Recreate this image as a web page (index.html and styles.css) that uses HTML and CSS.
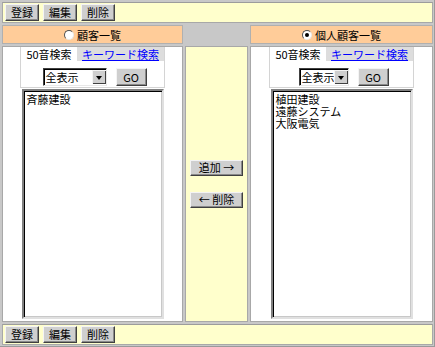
FILE: index.html
```html
<!DOCTYPE html>
<html lang="ja">
<head>
<meta charset="utf-8">
<link rel="stylesheet" href="styles.css">
</head>
<body>
<div class="frame">
  <div class="bar">
    <button class="btn">登録</button>
    <button class="btn">編集</button>
    <button class="btn">削除</button>
  </div>

  <div class="head orange"><span class="radio"></span>顧客一覧</div>
  <div class="head mid"></div>
  <div class="head orange"><span class="radio on"></span>個人顧客一覧</div>

  <div class="panel">
    <div class="search">
      <div class="tabs">
        <span class="tab active">50音検索</span>
        <span class="tab other"><a href="#">キーワード検索</a></span>
      </div>
      <div class="controls">
        <span class="select wide"><span class="val">全表示</span><span class="arrow"></span></span>
        <button class="btn go">GO</button>
      </div>
    </div>
    <div class="list">
      <div>斉藤建設</div>
    </div>
  </div>

  <div class="middle">
    <button class="btn move">追加 →</button>
    <button class="btn move">← 削除</button>
  </div>

  <div class="panel">
    <div class="search">
      <div class="tabs">
        <span class="tab active">50音検索</span>
        <span class="tab other"><a href="#">キーワード検索</a></span>
      </div>
      <div class="controls">
        <span class="select narrow"><span class="val">全表示</span><span class="arrow"></span></span>
        <button class="btn go">GO</button>
      </div>
    </div>
    <div class="list">
      <div>植田建設</div>
      <div>遠藤システム</div>
      <div>大阪電気</div>
    </div>
  </div>

  <div class="bar">
    <button class="btn">登録</button>
    <button class="btn">編集</button>
    <button class="btn">削除</button>
  </div>
</div>
</body>
</html>
```

FILE: styles.css
```css
html, body {
  margin: 0;
  padding: 0;
  background: #ffffff;
}

body {
  font-family: "Noto Sans CJK JP", "Noto Sans", sans-serif;
  font-size: 11px;
  color: #000;
}

.frame {
  box-sizing: border-box;
  width: 435px;
  height: 347px;
  background: #c8c8c8;
  border-right: 1px solid #9a9a9a;
  border-bottom: 1px solid #9a9a9a;
  padding: 2px 2px 1px 2px;
  display: grid;
  grid-template-columns: 181px 63px 183px;
  grid-template-rows: 21px 19px 1fr 21px;
  gap: 2px;
}

.bar {
  grid-column: 1 / 4;
  background: #ffffcc;
  border: 1px solid #a8a8a8;
  border-top-color: #9c9c9c;
  display: flex;
  align-items: center;
  gap: 4px;
  padding-left: 2px;
}

.btn {
  font-family: inherit;
  font-size: 11px;
  line-height: 13px;
  height: 17px;
  padding: 0 5px;
  margin: 0;
  background: #cfcfcf;
  color: #000;
  border: 1px solid;
  border-color: #f4f4f4 #404040 #404040 #f4f4f4;
  box-shadow: inset -1px -1px 0 #8a8a8a;
  cursor: default;
  white-space: nowrap;
}

.head {
  display: flex;
  align-items: center;
  justify-content: center;
  gap: 3px;
  border: 1px solid #b0b0b0;
}

.orange {
  background: #ffcc99;
}

.mid {
  background: #c8c8c8;
  border-color: #c8c8c8;
}

.radio {
  box-sizing: border-box;
  width: 10px;
  height: 10px;
  border-radius: 50%;
  background: #fff;
  border: 1px solid;
  border-color: #505050 #e8e8e8 #e8e8e8 #505050;
  position: relative;
}

.radio.on::after {
  content: "";
  position: absolute;
  left: 2px;
  top: 2px;
  width: 4px;
  height: 4px;
  border-radius: 50%;
  background: #000;
}

.panel {
  background: #ffffff;
  border: 1px solid #a8a8a8;
  display: flex;
  flex-direction: column;
  align-items: center;
  padding: 0 0 2px 0;
  min-height: 0;
}

.search {
  width: 143px;
  border: 1px solid #d4d4d4;
  border-top: none;
}

.tabs {
  display: flex;
  height: 14px;
  line-height: 14px;
}

.tab {
  display: block;
  white-space: nowrap;
}

.tab.active {
  width: 56px;
  background: #fff;
  text-align: center;
}

.tab.other {
  flex: 1;
  background: #dddddd;
  text-align: center;
}

.tab.other a {
  color: #0000ff;
  text-decoration: underline;
}

.controls {
  height: 26px;
  display: flex;
  align-items: flex-end;
  justify-content: center;
  gap: 9px;
  padding-left: 4px;
  padding-bottom: 1px;
  box-sizing: border-box;
}

.select {
  box-sizing: border-box;
  height: 18px;
  display: flex;
  align-items: stretch;
  background: #fff;
  border: 1px solid;
  border-color: #404040 #e8e8e8 #e8e8e8 #404040;
  box-shadow: inset 1px 1px 0 #000;
  white-space: nowrap;
  overflow: hidden;
}

.select.wide {
  width: 64px;
}

.select.narrow {
  width: 50px;
}

.select .val {
  flex: 1;
  padding-left: 2px;
  line-height: 16px;
  overflow: hidden;
}

.arrow {
  flex: 0 0 13px;
  margin: 1px 0 1px 0;
  background: #cfcfcf;
  border-left: 1px solid #f4f4f4;
  border-top: 1px solid #f4f4f4;
  box-shadow: inset -1px -1px 0 #404040;
  position: relative;
}

.arrow::after {
  content: "";
  position: absolute;
  left: 3px;
  top: 5px;
  border-left: 3.5px solid transparent;
  border-right: 3.5px solid transparent;
  border-top: 4px solid #000;
}

.btn.go {
  height: 18px;
  width: 31px;
  padding: 0;
}

.list {
  box-sizing: border-box;
  width: 142px;
  flex: 1;
  margin-top: 1px;
  border: 2px solid;
  border-color: #808080 #e0e0e0 #e0e0e0 #808080;
  box-shadow: inset 1px 1px 0 #000, inset -1px -1px 0 #c8c8c8;
  padding: 2px 3px;
  line-height: 13px;
  min-height: 0;
}

.list div {
  height: 12px;
  line-height: 12px;
  white-space: nowrap;
  overflow: visible;
}

.middle {
  background: #ffffcc;
  border: 1px solid #a8a8a8;
  display: flex;
  flex-direction: column;
  align-items: center;
  justify-content: center;
  gap: 16px;
  padding-bottom: 1px;
}

.btn.move {
  width: 53px;
  height: 16px;
  padding: 0;
}
```
